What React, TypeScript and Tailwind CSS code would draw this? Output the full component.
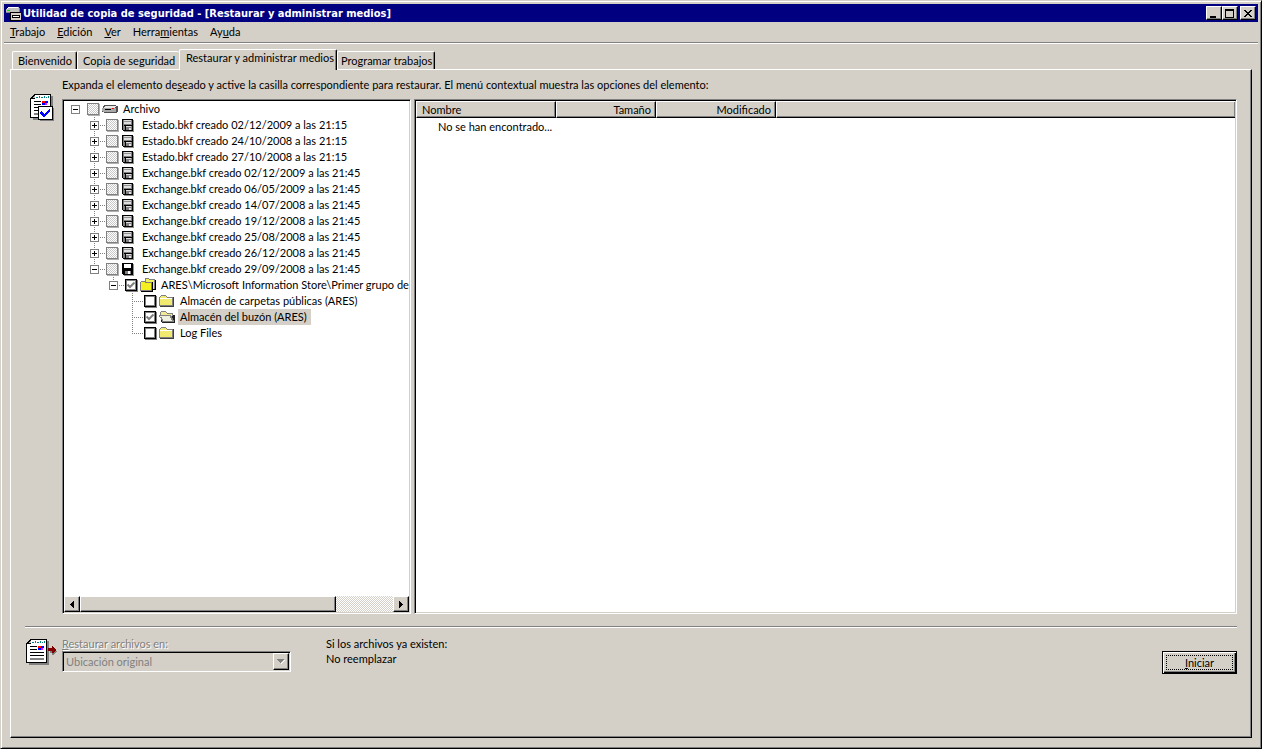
import React, { useState } from 'react';

type IconName = 'drive' | 'tape' | 'tapeOpen' | 'folders' | 'folder' | 'folderOpen';

interface TreeItem {
  id: string;
  label: string;
  level: number;
  icon: IconName;
  expander?: 'plus' | 'minus';
  disabled?: boolean;
  last?: boolean;
}

const backups = [
  'Estado.bkf creado 02/12/2009 a las 21:15',
  'Estado.bkf creado 24/10/2008 a las 21:15',
  'Estado.bkf creado 27/10/2008 a las 21:15',
  'Exchange.bkf creado 02/12/2009 a las 21:45',
  'Exchange.bkf creado 06/05/2009 a las 21:45',
  'Exchange.bkf creado 14/07/2008 a las 21:45',
  'Exchange.bkf creado 19/12/2008 a las 21:45',
  'Exchange.bkf creado 25/08/2008 a las 21:45',
  'Exchange.bkf creado 26/12/2008 a las 21:45',
];

const items: TreeItem[] = [
  { id: 'root', label: 'Archivo', level: 0, icon: 'drive', expander: 'minus', disabled: true, last: true },
  ...backups.map((label, i): TreeItem => ({
    id: `backup-${i}`,
    label,
    level: 1,
    icon: 'tape',
    expander: 'plus',
    disabled: true,
  })),
  { id: 'current', label: 'Exchange.bkf creado 29/09/2008 a las 21:45', level: 1, icon: 'tapeOpen', expander: 'minus', disabled: true, last: true },
  { id: 'store', label: 'ARES\\Microsoft Information Store\\Primer grupo de a', level: 2, icon: 'folders', expander: 'minus', last: true },
  { id: 'public', label: 'Almacén de carpetas públicas (ARES)', level: 3, icon: 'folder' },
  { id: 'mailbox', label: 'Almacén del buzón (ARES)', level: 3, icon: 'folderOpen' },
  { id: 'logs', label: 'Log Files', level: 3, icon: 'folder', last: true },
];

const raised =
  'border border-t-white border-l-white border-r-black border-b-black bg-[#d4d0c8] shadow-[inset_-1px_-1px_0_#808080]';

function AppIcon() {
  return (
    <svg width="16" height="16" shapeRendering="crispEdges" aria-hidden="true">
      <path d="M2 2h11v1h1v5H0V4h1V3h1z" fill="#c0c0c0" />
      <path d="M2 2h10v1H2zM1 3h1v1H1z" fill="#fff" />
      <path d="M0 7h13v1H0zM13 3h1v4h-1z" fill="#808080" />
      <path d="M1 5h3v1H1z" fill="#00e000" />
      <path d="M4 7h11v9H4z" fill="#000" />
      <path d="M5 8h10v7H5z" fill="#d4d0c8" />
      <path d="M6 10h8v3H6z" fill="#000" />
      <path d="M7 11h6v1H7z" fill="#fff" />
    </svg>
  );
}

function DocumentShape() {
  return (
    <>
      <path d="M3 2h20v24H3z" fill="#808080" />
      <path d="M4 0h17v24H0V4h1V3h1V2h1V1h1z" fill="#000" />
      <path d="M5 1h15v22H1V5h4z" fill="#fff" />
      <path d="M2 4h1V3h1V2h1v2z" fill="#c0c0c0" />
      <path d="M6 3h2v1H6zM9 2h1v2H9zM11 3h2v1h-2zM14 2h1v2h-1zM16 3h1v1h-1zM18 2h1v2h-1z" fill="#008080" />
      <path d="M4 7h7v1H4zM4 10h7v1H4zM4 13h14v1H4zM4 16h14v1H4z" fill="#000" />
      <path d="M4 19h14v2H4z" fill="#808080" />
      <path d="M12 7h3v2h-3z" fill="#ff0000" />
      <path d="M15 7h3v2h-3zM12 9h3v2h-3z" fill="#0000ff" />
      <path d="M15 9h2v2h-2z" fill="#ff00ff" />
    </>
  );
}

function RestoreIcon() {
  return (
    <svg width="24" height="28" shapeRendering="crispEdges" aria-hidden="true">
      <DocumentShape />
      <path d="M10 14h14v13H10z" fill="#808080" />
      <path d="M8 12h15v14H8z" fill="#000" />
      <path d="M9 13h13v12H9z" fill="#fff" />
      <path
        d="M11 17h1v1h1v1h1v1h1v-1h1v-1h1v-1h1v-1h1v-1h1v3h-1v1h-1v1h-1v1h-1v1h-1v1h-2v-1h-1v-1h-1v-1h-1z"
        fill="#0000ff"
      />
    </svg>
  );
}

function ExportIcon() {
  return (
    <svg width="31" height="27" shapeRendering="crispEdges" aria-hidden="true">
      <DocumentShape />
      <path d="M24 12h7v1h-1v1h-1v1h-1v1h-2v-2h-2z" fill="#808080" />
      <path d="M22 9h4V7h1v1h1v1h1v1h1v2h-1v1h-1v1h-2v-2h-4z" fill="#800000" />
    </svg>
  );
}

function TreeIcon({ name }: { name: IconName }) {
  return (
    <svg width="16" height="16" shapeRendering="crispEdges" aria-hidden="true" className="shrink-0">
      {name === 'drive' && (
        <>
          <path d="M2 4h12v1h2v6h-1v1H2v-1H0V7h1V5h1z" fill="#505050" />
          <path d="M3 5h11v1H3zM2 6h11v1H2z" fill="#e8e8e8" />
          <path d="M0 7h14v4H1v-1H0z" fill="#a8a8a8" />
          <path d="M3 8h6v1H3z" fill="#000" />
          <path d="M10 7h2v1h-2z" fill="#ff0000" />
        </>
      )}
      {(name === 'tape' || name === 'tapeOpen') && (
        <>
          <path d="M2 3h11v12H3v-1H2z" fill="#909090" />
          <path d="M1 2h11v12H2v-1H1z" fill="#000" />
          {name === 'tape' ? (
            <>
              <path d="M2 3h9v10H2z" fill="#808080" />
              <path d="M3 3h7v4H3z" fill="#e0e0e0" />
              <path d="M3 4h7v1H3z" fill="#909090" />
              <path d="M3 8h8v1H3zM4 9h1v4H4z" fill="#000" />
              <path d="M5 9h5v1H5zM8 11h2v2H8z" fill="#e0e0e0" />
            </>
          ) : (
            <>
              <path d="M3 3h7v4H3z" fill="#fff" />
              <path d="M4 10h6v3H4z" fill="#808080" />
              <path d="M7 10h2v3H7z" fill="#fff" />
            </>
          )}
        </>
      )}
      {name === 'folders' && (
        <>
          <path d="M6 2h4v1h6v10H6z" fill="#000" />
          <path d="M5 1h4v1h6v10H5z" fill="#808080" />
          <path d="M6 2h3v1h5v9H6z" fill="#f0f060" />
          <path d="M1 5h12v10H1z" fill="#000" />
          <path d="M1 4h5v1h6v9H0V5h1z" fill="#808080" />
          <path d="M1 5h4v1h6v7H1z" fill="#f4f020" />
        </>
      )}
      {name === 'folder' && (
        <>
          <path d="M2 4h13v10H1v-1h1z" fill="#404040" />
          <path d="M2 2h5v1h1v1h6v9H0V4h1V3h1z" fill="#808080" />
          <path d="M2 3h5v1h1v1h5v7H1V4h1z" fill="#f0ea70" />
          <path d="M1 5h12v1H1z" fill="#fff" />
        </>
      )}
      {name === 'folderOpen' && (
        <>
          <path d="M3 3h5v1h6v2h2v8H3v-1H2z" fill="#202020" />
          <path d="M2 2h5v1h1v1h6v3H1V3h1z" fill="#808080" />
          <path d="M2 3h5v1h1v1h5v2H2z" fill="#f0ea90" />
          <path d="M0 6h12v1h1v2h1v2h1v2H3v-2H2V9H1V8H0z" fill="#808080" />
          <path d="M1 7h10v2h1v2h1v1H4v-2H3V8H1z" fill="#f0f0e0" />
        </>
      )}
    </svg>
  );
}

// One 19px indent cell holding the dotted branch lines of a row
function Branch({ item }: { item: TreeItem }) {
  return (
    <svg width="19" height="16" className="col-start-1 row-start-1" shapeRendering="crispEdges" aria-hidden="true">
      {item.level > 0 && (
        <>
          <path d={item.last ? 'M7.5 0v9' : 'M7.5 0v16'} stroke="#808080" strokeDasharray="1 1" />
          <path d="M7 8.5h12" stroke="#808080" strokeDasharray="1 1" />
        </>
      )}
    </svg>
  );
}

interface TreeRowProps {
  item: TreeItem;
  checked: boolean;
  selected: boolean;
  onToggle: () => void;
}

function TreeRow({ item, checked, selected, onToggle }: TreeRowProps) {
  return (
    <li className="flex h-4 items-center whitespace-nowrap">
      {Array.from({ length: item.level }, (_, i) => (
        <span key={i} className="w-[19px] shrink-0" />
      ))}
      <span className="grid shrink-0">
        <Branch item={item} />
        {item.expander && (
          <button
            type="button"
            aria-label={item.expander === 'plus' ? 'Expandir' : 'Contraer'}
            className="col-start-1 row-start-1 mt-1 ml-[3px] h-[9px] w-[9px] border border-[#808080] bg-white"
          >
            <svg width="7" height="7" className="block" shapeRendering="crispEdges">
              <path d="M1 3h5v1H1z" />
              {item.expander === 'plus' && <path d="M3 1h1v5H3z" />}
            </svg>
          </button>
        )}
      </span>
      <span className="grid w-[15px] shrink-0">
        <input
          id={item.id}
          type="checkbox"
          checked={checked}
          disabled={item.disabled}
          onChange={onToggle}
          className="col-start-1 row-start-1 h-3 w-3 appearance-none border border-black bg-white shadow-[1px_1px_0_#808080,inset_0_0_0_1px_#808080] disabled:border-[#808080] disabled:bg-[repeating-conic-gradient(#c8c8c8_0_25%,#fff_0_50%)] disabled:bg-[length:2px_2px] disabled:shadow-[1px_1px_0_#b0b0b0]"
        />
        {checked && (
          <svg width="12" height="12" className="pointer-events-none col-start-1 row-start-1" aria-hidden="true">
            <path d="M2.5 5.5l2.5 2.5L9.5 3.5" fill="none" stroke="#808080" strokeWidth="2" />
          </svg>
        )}
      </span>
      <TreeIcon name={item.icon} />
      <label htmlFor={item.id} className={selected ? 'ml-[3px] h-4 bg-[#d4d0c8] pr-1 pl-0.5' : 'ml-[3px] h-4 pr-1 pl-0.5'}>
        {item.label}
      </label>
    </li>
  );
}

function ScrollBar() {
  return (
    <div className="flex h-4 bg-[repeating-conic-gradient(#d4d0c8_0_25%,#fff_0_50%)] bg-[length:2px_2px]">
      <button type="button" aria-label="Izquierda" className={`flex h-4 w-4 items-center justify-center ${raised}`}>
        <svg width="4" height="7" shapeRendering="crispEdges"><path d="M3 0h1v7H3zM2 1h1v5H2zM1 2h1v3H1zM0 3h1v1H0z" /></svg>
      </button>
      <div className={`h-4 w-64 ${raised}`} />
      <button type="button" aria-label="Derecha" className={`ml-auto flex h-4 w-4 items-center justify-center ${raised}`}>
        <svg width="4" height="7" shapeRendering="crispEdges"><path d="M0 0h1v7H0zM1 1h1v5H1zM2 2h1v3H2zM3 3h1v1H3z" /></svg>
      </button>
    </div>
  );
}

function Key({ children }: { children: string }) {
  return <span className="underline underline-offset-1">{children}</span>;
}

function TitleBar() {
  const button = `flex h-[14px] w-4 items-center justify-center ${raised}`;
  return (
    <header className="flex h-[18px] items-center bg-[#000080] px-0.5 text-white">
      <AppIcon />
      <h1 className="ml-px pt-px font-['DejaVu_Sans_Condensed',sans-serif] text-[11px] font-bold">
        Utilidad de copia de seguridad - [Restaurar y administrar medios]
      </h1>
      <div className="ml-auto flex">
        <button type="button" aria-label="Minimizar" className={button}>
          <svg width="10" height="9" shapeRendering="crispEdges"><path d="M1 7h6v2H1z" /></svg>
        </button>
        <button type="button" aria-label="Maximizar" className={button}>
          <svg width="10" height="9" shapeRendering="crispEdges"><path d="M0 0h9v9H0zM1 2v6h7V2z" fillRule="evenodd" /></svg>
        </button>
        <button type="button" aria-label="Cerrar" className={`ml-0.5 ${button}`}>
          <svg width="8" height="7" shapeRendering="crispEdges">
            <path d="M0 0h2v1h1v1h2V1h1V0h2v1H7v1H6v1H5v1h1v1h1v1h1v1H6V6H5V5H3v1H2v1H0V6h1V5h1V4h1V3H2V2H1V1H0z" />
          </svg>
        </button>
      </div>
    </header>
  );
}

function MenuBar() {
  return (
    <nav className="flex h-5 items-center gap-3 pl-1.5">
      <button type="button"><Key>T</Key>rabajo</button>
      <button type="button"><Key>E</Key>dición</button>
      <button type="button"><Key>V</Key>er</button>
      <button type="button">Herra<Key>m</Key>ientas</button>
      <button type="button">Ay<Key>u</Key>da</button>
    </nav>
  );
}

function Tabs() {
  const tab = 'h-[18px] rounded-t-xs border-t border-l border-white text-left whitespace-nowrap';
  const edge = 'border-r border-r-black shadow-[inset_-1px_0_0_#808080]';
  return (
    <div role="tablist" className="flex h-5 items-end pl-0.5">
      <button type="button" role="tab" className={`w-[65px] pl-[5px] ${tab} ${edge}`}>Bienvenido</button>
      <button type="button" role="tab" className={`w-[102px] pl-[5px] ${tab}`}>Copia de seguridad</button>
      <button
        type="button"
        role="tab"
        aria-selected="true"
        className={`z-10 -mb-px h-[21px] w-[158px] rounded-t-xs border-t border-l border-white bg-[#d4d0c8] pb-1 pl-1.5 text-left whitespace-nowrap ${edge}`}
      >
        Restaurar y administrar medios
      </button>
      <button type="button" role="tab" className={`w-[98px] pl-[3px] ${tab} ${edge}`}>Programar trabajos</button>
    </div>
  );
}

function FileList() {
  const cell = `h-[17px] pr-1 pl-[5px] font-normal leading-[15px] ${raised}`;
  return (
    <table className="w-full table-fixed border-separate border-spacing-0">
      <thead>
        <tr>
          <th className={`w-[140px] text-left ${cell}`}>Nombre</th>
          <th className={`w-[100px] text-right ${cell}`}>Tamaño</th>
          <th className={`w-[120px] text-right ${cell}`}>Modificado</th>
          <th className={`border-r-0 ${cell}`} />
        </tr>
      </thead>
      <tbody>
        <tr>
          <td colSpan={4} className="h-[18px] pl-[22px]">No se han encontrado...</td>
        </tr>
      </tbody>
    </table>
  );
}

export default function App() {
  const [checked, setChecked] = useState<string[]>(['store', 'mailbox']);

  const toggle = (id: string) => {
    setChecked((prev) => (prev.includes(id) ? prev.filter((x) => x !== id) : [...prev, id]));
  };

  const sunken =
    'border border-t-[#808080] border-l-[#808080] border-r-white border-b-white bg-white shadow-[inset_1px_1px_0_#000,inset_-1px_-1px_0_#d4d0c8]';

  return (
    <div className="flex min-h-screen flex-col border border-t-[#d4d0c8] border-l-[#d4d0c8] border-r-black border-b-black bg-[#d4d0c8] p-[3px] font-['Lato',sans-serif] text-[11px] leading-4 text-black shadow-[inset_1px_1px_0_#fff,inset_-1px_-1px_0_#808080]">
      <TitleBar />
      <MenuBar />
      <div className="h-0.5 border-t border-b border-t-[#808080] border-b-white" />

      <main className="flex flex-1 flex-col px-1.5 pt-[5px] pb-[7px]">
        <Tabs />
        <section className={`flex flex-1 flex-col px-[14px] pt-[7px] ${raised}`}>
          <div className="flex flex-1">
            <div className="w-[37px] shrink-0 pt-[17px] pl-[5px]">
              <RestoreIcon />
            </div>
            <div className="flex min-w-0 flex-1 flex-col gap-1.5">
              <p>
                Expanda el elemento de<Key>s</Key>eado y active la casilla correspondiente para restaurar. El menú contextual muestra las opciones del elemento:
              </p>
              <div className="flex flex-1 gap-[3px]">
                <div className={`flex w-[349px] shrink-0 flex-col p-px ${sunken}`}>
                  <ul className="flex-1 overflow-hidden pl-1">
                    {items.map((item) => (
                      <TreeRow
                        key={item.id}
                        item={item}
                        checked={checked.includes(item.id)}
                        selected={item.id === 'mailbox'}
                        onToggle={() => toggle(item.id)}
                      />
                    ))}
                  </ul>
                  <ScrollBar />
                </div>
                <div className={`min-w-0 flex-1 p-px ${sunken}`}>
                  <FileList />
                </div>
              </div>
            </div>
          </div>

          <div className="mt-3 h-0.5 border-t border-b border-t-[#808080] border-b-white" />

          <div className="flex pt-2 pb-[63px] leading-[15px]">
            <div className="w-[37px] shrink-0 pt-[3px] pl-px">
              <ExportIcon />
            </div>
            <div className="w-[229px]">
              <label htmlFor="target" className="block text-[#808080] [text-shadow:1px_1px_0_#fff]">
                <Key>R</Key>estaurar archivos en:
              </label>
              <div className="grid h-[21px] border border-t-[#808080] border-l-[#808080] border-r-white border-b-white p-px shadow-[inset_1px_1px_0_#000,inset_-1px_-1px_0_#d4d0c8]">
                <select id="target" disabled className="col-start-1 row-start-1 appearance-none pl-0.5 text-[#808080] opacity-100">
                  <option>Ubicación original</option>
                </select>
                <span className={`pointer-events-none col-start-1 row-start-1 flex w-4 items-center justify-center justify-self-end ${raised}`}>
                  <svg width="8" height="5" shapeRendering="crispEdges" aria-hidden="true">
                    <path d="M7 1h1v1H7v1H6v1H5v1H4V4z" fill="#fff" />
                    <path d="M0 0h7v1H6v1H5v1H4v1H3V3H2V2H1V1H0z" fill="#808080" />
                  </svg>
                </span>
              </div>
            </div>
            <div className="ml-[35px]">
              <p>Si los archivos ya existen:</p>
              <p>No reemplazar</p>
            </div>
            <button type="button" className="mt-[15px] ml-auto h-[23px] w-[75px] border border-black bg-[#d4d0c8] p-[3px] shadow-[inset_1px_1px_0_#fff,inset_-1px_-1px_0_#000,inset_-2px_-2px_0_#808080]">
              <span className="flex h-full items-center justify-center border border-dotted border-black">
                <span><Key>I</Key>niciar</span>
              </span>
            </button>
          </div>
        </section>
      </main>
    </div>
  );
}
